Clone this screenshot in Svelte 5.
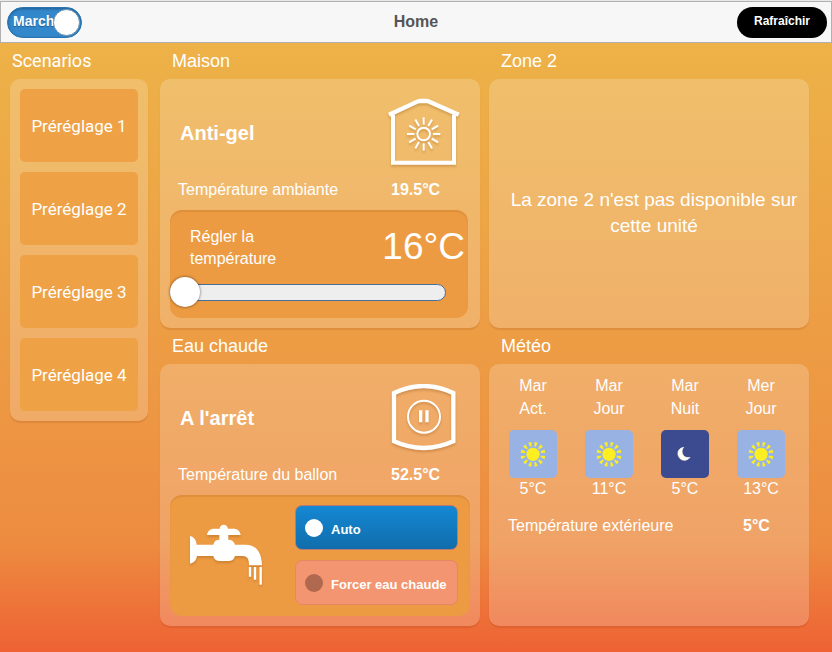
<script>
  let running = $state(true);
  let target = $state(16);
  let mode = $state('auto');

  const presets = [1, 2, 3, 4];
  const forecast = [
    { day: 'Mar', part: 'Act.', icon: 'sun', temp: 5 },
    { day: 'Mar', part: 'Jour', icon: 'sun', temp: 11 },
    { day: 'Mar', part: 'Nuit', icon: 'moon', temp: 5 },
    { day: 'Mer', part: 'Jour', icon: 'sun', temp: 13 }
  ];
  const rays = Array.from({ length: 12 }, (_, i) => i * 30);
</script>

<div class="page">
  <header>
    <label class="switch">
      <input type="checkbox" bind:checked={running} aria-label="Marche" />
      <span class="switch-text">Marche</span>
      <span class="knob"></span>
    </label>
    <h1>Home</h1>
    <button class="refresh" type="button">Rafraîchir</button>
  </header>

  <div class="content">
    <aside>
      <h2 class="scenario-title">Scenarios</h2>
      <div class="panel presets">
        {#each presets as n}
          <button type="button">Préréglage {n}</button>
        {/each}
      </div>
    </aside>

    <main>
      <section>
        <h2>Maison</h2>
        <div class="panel">
          <div class="head">
            <h3>Anti-gel</h3>
            <svg class="shadowed" width="72" height="70" viewBox="0 0 216 210" fill="none" stroke="#fff" aria-hidden="true">
              <path d="M15 50V194H198V50" stroke-width="12" />
              <path d="M3 50L88 11Q92 9 97 9H115Q120 9 124 11L212 50" stroke-width="13" />
              <circle cx="107" cy="108" r="19" stroke-width="6" />
              {#each rays as a}
                <path d="M107 80V58" stroke-width="6" transform="rotate({a} 107 108)" />
              {/each}
            </svg>
          </div>
          <div class="reading"><span>Température ambiante</span><strong>19.5°C</strong></div>
          <div class="inset setpoint">
            <div class="setpoint-row">
              <label for="target">Régler la température</label>
              <output for="target">{target}°C</output>
            </div>
            <input id="target" type="range" min="16" max="30" bind:value={target} />
          </div>
        </div>
      </section>

      <section>
        <h2>Zone 2</h2>
        <div class="panel unavailable">
          <p>La zone 2 n'est pas disponible sur cette unité</p>
        </div>
      </section>

      <section>
        <h2>Eau chaude</h2>
        <div class="panel">
          <div class="head">
            <h3>A l'arrêt</h3>
            <svg class="shadowed" width="66" height="68" viewBox="64 42 198 204" fill="none" stroke="#fff" aria-hidden="true">
              <path d="M73 69Q162 27 251 69V214Q162 254 73 214Z" stroke-width="13" />
              <circle cx="163" cy="140" r="48" stroke-width="6" />
              <path d="M153 121V157M172 121V157" stroke-width="10" />
            </svg>
          </div>
          <div class="reading"><span>Température du ballon</span><strong>52.5°C</strong></div>
          <div class="inset water">
            <svg class="shadowed" width="73" height="63" viewBox="90 132 219 189" fill="#fff" aria-hidden="true">
              <path d="M90 168C102 170 109 181 110 194H160C162 184 168 179 178 179V165H141C143 152 151 146 163 146H179C179 139 184 134 191 134S203 139 204 146H220C232 146 240 152 242 165H205V179C216 179 223 185 225 194H258C290 194 305 220 306 256H267C267 238 263 229 249 228H225C222 238 216 243 206 243H179C169 243 162 238 160 228H111C109 240 102 249 90 251Z" />
              <path d="M270 261V290M285 261V299M302 261V314" stroke="#fff" stroke-width="7" />
            </svg>
            <div class="modes">
              <label class:active={mode === 'auto'}>
                <input type="radio" name="mode" value="auto" bind:group={mode} />
                <span>Auto</span>
              </label>
              <label class:active={mode === 'force'}>
                <input type="radio" name="mode" value="force" bind:group={mode} />
                <span>Forcer eau chaude</span>
              </label>
            </div>
          </div>
        </div>
      </section>

      <section>
        <h2>Météo</h2>
        <div class="panel weather">
          <div class="forecast">
            {#each forecast as f}
              <div class="slot">
                <span>{f.day}</span>
                <span>{f.part}</span>
                <div class="tile {f.icon}">
                  <svg width="48" height="48" viewBox="0 0 144 144" aria-hidden="true">
                    {#if f.icon === 'sun'}
                      <circle cx="72" cy="73" r="20" fill="#fcee21" />
                      {#each rays as a}
                        <path d="M67 36H77L74 49H70Z" fill="#fcee21" transform="rotate({a + 15} 72 73)" />
                      {/each}
                    {:else}
                      <path d="M68 52C54 54 48 66 52 77C57 92 76 97 87 82C74 85 66 78 64 70C62 63 64 57 68 52Z" fill="#fffdf0" stroke="#fffdf0" stroke-width="2" />
                    {/if}
                  </svg>
                </div>
                <span class="temp">{f.temp}°C</span>
              </div>
            {/each}
          </div>
          <div class="outside"><span>Température extérieure</span><strong>5°C</strong></div>
        </div>
      </section>
    </main>
  </div>
</div>

<style>
  :global(body) {
    margin: 0;
  }
  .page {
    min-height: 100vh;
    box-sizing: border-box;
    padding: 1px 0 24px;
    font: 16px/24px 'Liberation Sans', Arial, sans-serif;
    color: #fff;
    background: linear-gradient(#e8e8e8 1px, #edb548 1px, #ed9b44 55%, #ed8c40 83%, #ee6234 100%);
  }
  .page * {
    box-sizing: border-box;
  }
  h1, h2, h3, p {
    margin: 0;
  }
  header {
    display: grid;
    grid-template-columns: 1fr auto 1fr;
    align-items: center;
    height: 42px;
    padding: 0 4px 0 6px;
    background: #f7f7f7;
    border: 1px solid #b0b0b0;
  }
  h1 {
    padding-right: 2px;
    font-size: 16px;
    color: #555;
  }
  .switch {
    position: relative;
    display: flex;
    align-items: center;
    width: 75px;
    height: 31px;
    padding-left: 5px;
    border-radius: 16px;
    border: 1px solid #2a72ad;
    background: #3388cc;
    box-shadow: inset 0 1px 3px #1d5d94;
    overflow: hidden;
    cursor: pointer;
  }
  .switch input {
    position: absolute;
    inset: 0;
    margin: 0;
    opacity: 0;
  }
  .switch-text {
    padding-bottom: 2px;
    font: bold 14px/20px 'Liberation Sans', Arial, sans-serif;
    text-shadow: 0 1px 1px #1d5d94;
  }
  .knob {
    position: absolute;
    right: 1px;
    top: 1px;
    width: 27px;
    height: 27px;
    border-radius: 50%;
    border: 1px solid #6f8fa8;
    background: #fff;
  }
  .switch:not(:has(input:checked)) .knob {
    right: auto;
    left: 1px;
  }
  .refresh {
    justify-self: end;
    width: 90px;
    height: 31px;
    padding: 0 0 2px;
    border: 0;
    border-radius: 16px;
    background: #000;
    color: #fff;
    font: bold 12px 'Liberation Sans', Arial, sans-serif;
  }
  .content {
    display: flex;
    align-items: flex-start;
    gap: 12px;
    padding: 0 23px 0 10px;
  }
  aside {
    flex: 0 0 138px;
  }
  main {
    flex: 1;
    display: grid;
    grid-template-columns: 1fr 1fr;
    column-gap: 9px;
  }
  section {
    display: flex;
    flex-direction: column;
  }
  h2 {
    padding-left: 12px;
    font-size: 18px;
    line-height: 36px;
    font-weight: normal;
  }
  .scenario-title {
    padding-left: 2px;
    font-family: Roboto, sans-serif;
  }
  .panel {
    flex: 1;
    padding: 10px;
    border-radius: 10px;
    background: rgba(255, 255, 255, 0.2);
    box-shadow: 0 2px 1px rgba(120, 40, 0, 0.13);
  }
  .presets {
    display: flex;
    flex-direction: column;
    gap: 10px;
  }
  .presets button {
    height: 73px;
    padding: 0;
    border: 0;
    border-radius: 5px;
    background: #eea145;
    color: #fff;
    font: 17px Roboto, sans-serif;
  }
  .head {
    display: grid;
    grid-template-columns: 1fr 92px;
    align-items: center;
    height: 88px;
    padding-left: 10px;
  }
  .head svg {
    justify-self: center;
  }
  .shadowed {
    filter: drop-shadow(0 2px 1px rgba(120, 60, 0, 0.25));
  }
  h3 {
    font-size: 20px;
  }
  .reading {
    display: grid;
    grid-template-columns: 1fr 79px;
    padding: 1px 0 0 8px;
  }
  .inset {
    margin-top: 8px;
    border-radius: 12px;
    background: #ed9b42;
    box-shadow: inset 0 2px 1px rgba(120, 60, 0, 0.13);
  }
  .setpoint {
    height: 108px;
    margin-right: 2px;
    padding-top: 14px;
  }
  .setpoint-row {
    display: flex;
    justify-content: space-between;
    height: 53px;
    padding: 0 3px 0 20px;
  }
  .setpoint-row label {
    width: 110px;
    line-height: 22px;
    padding-top: 2px;
  }
  output {
    font-size: 37px;
    line-height: 46px;
  }
  input[type='range'] {
    appearance: none;
    display: block;
    width: calc(100% - 22px);
    height: 30px;
    margin: 0;
    background: none;
  }
  input[type='range']::-webkit-slider-runnable-track {
    height: 17px;
    border: 1px solid #456f9a;
    border-radius: 9px;
    background: #eee;
  }
  input[type='range']::-webkit-slider-thumb {
    appearance: none;
    width: 30px;
    height: 30px;
    margin: -8px 0 0 -1px;
    border-radius: 50%;
    background: #fff;
    box-shadow: 0 0 3px rgba(0, 0, 0, 0.6);
  }
  .water {
    display: flex;
    align-items: center;
    justify-content: space-between;
    height: 121px;
    padding: 0 12px 0 20px;
  }
  .modes {
    display: flex;
    flex-direction: column;
    align-self: flex-start;
    gap: 10px;
    width: 163px;
    padding-top: 10px;
  }
  .modes label {
    display: flex;
    align-items: center;
    gap: 8px;
    height: 45px;
    padding-left: 9px;
    border: 1px solid #e68663;
    border-radius: 7px;
    background: #f39570;
    font: bold 13px/20px 'Liberation Sans', Arial, sans-serif;
    white-space: nowrap;
  }
  .modes span {
    padding-top: 5px;
  }
  .modes .active {
    border-color: #b77a74;
    background: linear-gradient(#1588d4, #106dab);
  }
  .modes input {
    appearance: none;
    flex: none;
    width: 18px;
    height: 18px;
    margin: 0;
    border-radius: 50%;
    background: #b0694e;
  }
  .modes .active input {
    background: #fff;
  }
  .unavailable {
    display: flex;
    align-items: center;
    justify-content: center;
    padding: 18px 10px 0 20px;
    text-align: center;
    font-size: 19px;
    line-height: 26px;
  }
  .unavailable p {
    flex: 1;
  }
  .weather {
    padding-left: 6px;
  }
  .forecast {
    display: grid;
    grid-template-columns: repeat(4, 1fr);
  }
  .slot {
    display: flex;
    flex-direction: column;
    align-items: center;
    line-height: 23px;
  }
  .tile {
    width: 48px;
    height: 48px;
    margin-top: 10px;
    border-radius: 5px;
    background: #98b3e3;
  }
  .tile.moon {
    background: #3c4a90;
  }
  .temp {
    line-height: 21px;
  }
  .outside {
    display: grid;
    grid-template-columns: 1fr 56px;
    margin-top: 15px;
    padding-left: 13px;
  }
</style>
